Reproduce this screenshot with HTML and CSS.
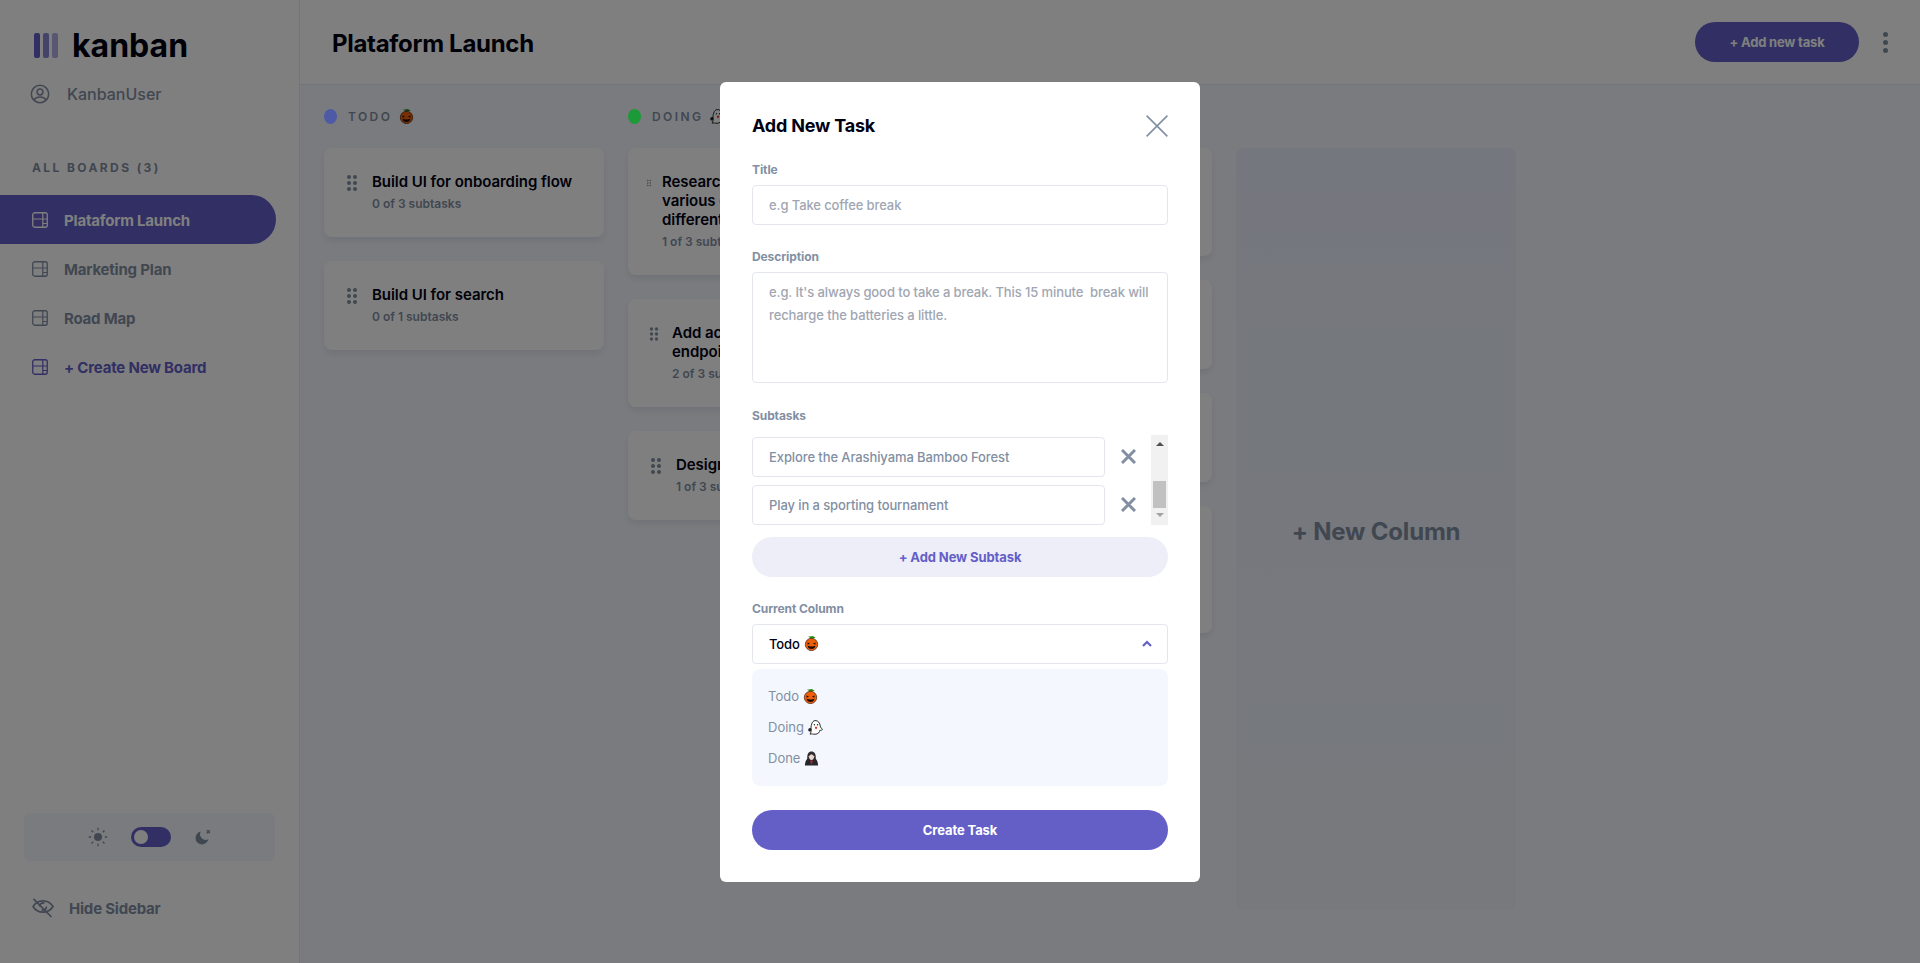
FILE: index.html
```html
<!DOCTYPE html>
<html lang="en">
<head>
    <meta charset="UTF-8">
    <meta name="viewport" content="width=device-width, initial-scale=1.0">
    <title>Kanban</title>
    <link rel="stylesheet" href="styles.css">
</head>
<body>
    <svg class="defs" width="0" height="0">
        <symbol id="board" viewBox="0 0 16 16">
            <rect x="0.75" y="0.75" width="14.5" height="14.5" rx="2" fill="none" stroke="currentColor" stroke-width="1.3"/>
            <path d="M1 7h14M10.800 1v14M10.800 11.500H15" fill="none" stroke="currentColor" stroke-width="1.200"/>
        </symbol>
        <symbol id="drag" viewBox="0 0 24 24">
            <circle cx="9" cy="6" r="2"/><circle cx="15" cy="6" r="2"/>
            <circle cx="9" cy="12" r="2"/><circle cx="15" cy="12" r="2"/>
            <circle cx="9" cy="18" r="2"/><circle cx="15" cy="18" r="2"/>
        </symbol>
        <symbol id="pumpkin" viewBox="0 0 16 16">
            <path d="M7 3.500C6.600 2 5.500 1.200 4 .9L9.500 0l3 1.800-2.700.6-.4 1.100z" fill="#2f8a1e"/>
            <circle cx="8" cy="9" r="6.600" fill="#ee5f0d" stroke="#3a1a05" stroke-width=".7"/>
            <path d="M3.800 6.800l2.600 1.200-2.600 1.200zM12.200 6.800L9.600 8l2.600 1.200zM3.800 10.500c2.200.8 6.200.8 8.400 0-.4 2.400-2 3.300-4.200 3.300s-3.800-.9-4.200-3.300z" fill="#1c0d02"/>
        </symbol>
        <symbol id="ghost" viewBox="0 0 16 16">
            <path d="M7.500 .6C11 .4 12.700 3.300 13 6.300c.2 1.500 1.700 3 2.500 3.800-.9 1-2.100 1.100-2.900.9-.2 2-1.900 4.200-5.100 4.200-1.800 0-3.500-.6-5.300-.1C2.900 13.500 3.500 12.300 3.300 10.500 2.800 7 4 .9 7.500 .6z" fill="#fff" stroke="#222" stroke-width="1"/>
            <path d="M.4 9.500c1-1.600 2.900-1.300 3.400 0 .3 1.300-1.100 3-2.400 2.700C.4 11.900 0 10.500 .4 9.500z" fill="#222"/>
            <circle cx="6.800" cy="5" r=".8" fill="#222"/><circle cx="10.200" cy="5" r=".8" fill="#222"/>
            <path d="M7.300 7.200h2.500c0 1.800-.6 2.600-1.200 2.600s-1.300-.9-1.300-2.600z" fill="#e5352b"/>
        </symbol>
        <symbol id="vampire" viewBox="0 0 16 16">
            <path d="M1 15.500c0-4 1.500-6.500 3-7.500h8c1.500 1 3 3.500 3 7.500z" fill="#26262b"/>
            <path d="M3.500 8.500C3 3 5 .5 8 .5s5 2.500 4.500 8l-2 1h-5z" fill="#2e2c33"/>
            <path d="M5.300 5.500C6 4.500 7 4 8 3.500c1 .5 2 1 2.700 2 .3 2-1 4-2.700 4s-3-2-2.700-4z" fill="#e9d5cb"/>
            <path d="M6.500 10h3L8 15z" fill="#b3262a"/>
        </symbol>
    </svg>

    <div class="app">
        <aside class="sidebar">
            <div class="logo">
                <div class="logo-bars"><span></span><span></span><span></span></div>
                <span class="logo-name">kanban</span>
            </div>
            <div class="user">
                <svg class="user-icon" viewBox="0 0 20 20" fill="none" stroke="currentColor" stroke-width="1.500">
                    <circle cx="10" cy="10" r="8.700"/>
                    <circle cx="10" cy="8" r="2.900"/>
                    <path d="M4.200 16.300c.8-2.200 3-3.200 5.800-3.200s5 1 5.800 3.200"/>
                </svg>
                <span>KanbanUser</span>
            </div>
            <h3 class="boards-title">ALL BOARDS (3)</h3>
            <nav class="boards">
                <a class="board active" href="#"><svg class="board-icon"><use href="#board"/></svg>Plataform Launch</a>
                <a class="board" href="#"><svg class="board-icon"><use href="#board"/></svg>Marketing Plan</a>
                <a class="board" href="#"><svg class="board-icon"><use href="#board"/></svg>Road Map</a>
                <a class="board create" href="#"><svg class="board-icon"><use href="#board"/></svg>+ Create New Board</a>
            </nav>
            <div class="theme">
                <svg class="sun" viewBox="0 0 20 20" fill="currentColor">
                    <circle cx="10" cy="10" r="4"/>
                    <path d="M10 .8v2.400M10 16.800v2.400M.8 10h2.400M16.800 10h2.400M3.500 3.500l1.700 1.700M14.800 14.800l1.700 1.700M3.500 16.500l1.700-1.700M14.800 5.200l1.700-1.700" fill="none" stroke="currentColor" stroke-width="1.300"/>
                </svg>
                <div class="toggle"><span class="knob"></span></div>
                <svg class="moon" viewBox="0 0 18 18" fill="currentColor">
                    <path d="M6.800 3.600A6.500 6.500 0 1 0 14.400 11.200 5.600 5.600 0 0 1 6.800 3.600z"/>
                    <path d="M12.800 2.300l3 3M15.800 2.300l-3 3" fill="none" stroke="currentColor" stroke-width="1.400"/>
                </svg>
            </div>
            <div class="hide-sidebar">
                <svg class="eye" viewBox="0 0 22 20" fill="none" stroke="currentColor" stroke-width="1.700">
                    <path d="M1 8.500C3.500 4.500 7 2.800 11 2.800s7.500 1.700 10 5.700c-2.500 4-6 5.700-10 5.700S3.500 12.500 1 8.500z"/>
                    <path d="M7.500 8.500a3.500 3.500 0 0 1 5-3.200M14.500 8.500a3.500 3.500 0 0 1-5 3.200"/>
                    <path d="M1.500 .8L19.500 19"/>
                </svg>
                <span>Hide Sidebar</span>
            </div>
        </aside>

        <div class="content">
            <header class="topbar">
                <h1>Plataform Launch</h1>
                <div class="topbar-actions">
                    <button class="add-task">+ Add new task</button>
                    <div class="kebab"><span></span><span></span><span></span></div>
                </div>
            </header>
            <main class="columns">
                <section class="column">
                    <h2 class="column-title"><span class="dot todo"></span>TODO <svg class="emoji"><use href="#pumpkin"/></svg></h2>
                    <article class="task">
                        <svg class="handle"><use href="#drag"/></svg>
                        <div><h4>Build UI for onboarding flow</h4><p>0 of 3 subtasks</p></div>
                    </article>
                    <article class="task">
                        <svg class="handle"><use href="#drag"/></svg>
                        <div><h4>Build UI for search</h4><p>0 of 1 subtasks</p></div>
                    </article>
                </section>
                <section class="column">
                    <h2 class="column-title"><span class="dot doing"></span>DOING <svg class="emoji"><use href="#ghost"/></svg></h2>
                    <article class="task">
                        <svg class="handle tiny"><use href="#drag"/></svg>
                        <div><h4>Research pricing points of various competitors and different models</h4><p>1 of 3 subtasks</p></div>
                    </article>
                    <article class="task">
                        <svg class="handle small"><use href="#drag"/></svg>
                        <div><h4>Add account management endpoints</h4><p>2 of 3 subtasks</p></div>
                    </article>
                    <article class="task">
                        <svg class="handle"><use href="#drag"/></svg>
                        <div><h4>Design settings</h4><p>1 of 3 subtasks</p></div>
                    </article>
                </section>
                <section class="column">
                    <h2 class="column-title"><span class="dot done"></span>DONE <svg class="emoji"><use href="#vampire"/></svg></h2>
                    <article class="task">
                        <svg class="handle"><use href="#drag"/></svg>
                        <div><h4>Conduct 5 wireframe tests with the design team</h4><p>1 of 1 subtasks</p></div>
                    </article>
                    <article class="task">
                        <svg class="handle"><use href="#drag"/></svg>
                        <div><h4>Market discovery</h4><p>1 of 1 subtasks</p></div>
                    </article>
                    <article class="task">
                        <svg class="handle"><use href="#drag"/></svg>
                        <div><h4>Competitor analysis</h4><p>2 of 2 subtasks</p></div>
                    </article>
                    <article class="task">
                        <svg class="handle"><use href="#drag"/></svg>
                        <div><h4>Create paper prototypes for version one of the new onboarding flow screens</h4><p>3 of 3 subtasks</p></div>
                    </article>
                </section>
                <section class="new-column">+ New Column</section>
            </main>
        </div>
    </div>

    <div class="overlay">
        <form class="modal">
            <div class="modal-head">
                <h2>Add New Task</h2>
                <svg class="close" viewBox="0 0 22 22" fill="none" stroke="currentColor" stroke-width="1.600">
                    <path d="M.6 .6l20.800 20.800M21.400 .6L.6 21.400"/>
                </svg>
            </div>

            <label class="label">Title</label>
            <input class="field" type="text" placeholder="e.g Take coffee break">

            <label class="label desc-label">Description</label>
            <textarea class="field area" placeholder="e.g. It's always good to take a break. This 15 minute  break will recharge the batteries a little."></textarea>

            <label class="label sub-label">Subtasks</label>
            <div class="subtasks">
                <div class="subtask-rows">
                    <div class="subtask">
                        <input class="field" type="text" placeholder="Explore the Arashiyama Bamboo Forest">
                        <svg class="remove" viewBox="0 0 15 15" fill="none" stroke="currentColor" stroke-width="3"><path d="M1 1l13 13M14 1L1 14"/></svg>
                    </div>
                    <div class="subtask">
                        <input class="field" type="text" placeholder="Play in a sporting tournament">
                        <svg class="remove" viewBox="0 0 15 15" fill="none" stroke="currentColor" stroke-width="3"><path d="M1 1l13 13M14 1L1 14"/></svg>
                    </div>
                </div>
                <div class="scrollbar">
                    <span class="arrow up"></span>
                    <span class="thumb"></span>
                    <span class="arrow down"></span>
                </div>
            </div>
            <button class="btn secondary" type="button">+ Add New Subtask</button>

            <label class="label col-label">Current Column</label>
            <div class="select">
                <span>Todo <svg class="emoji"><use href="#pumpkin"/></svg></span>
                <svg class="chevron" viewBox="0 0 10 7" fill="none" stroke="currentColor" stroke-width="2.200"><path d="M1 6l4-4 4 4"/></svg>
            </div>
            <ul class="options">
                <li>Todo <svg class="emoji"><use href="#pumpkin"/></svg></li>
                <li>Doing <svg class="emoji"><use href="#ghost"/></svg></li>
                <li>Done <svg class="emoji"><use href="#vampire"/></svg></li>
            </ul>
            <button class="btn primary" type="button">Create Task</button>
        </form>
    </div>
</body>
</html>
```
FILE: styles.css
```css
/* Basic styling */
* {
    box-sizing: border-box;
}

body {
    font-family: 'Inter', 'Noto Sans', sans-serif;
    background-color: #f4f7fd;
    color: #000112;
    margin: 0;
    height: 963px;
    overflow: hidden;
}

.defs {
    position: absolute;
}

.app {
    display: flex;
    height: 100%;
}

/* Sidebar */
.sidebar {
    width: 300px;
    flex-shrink: 0;
    background-color: #fff;
    border-right: 1px solid #e4ebfa;
    display: flex;
    flex-direction: column;
    color: #828fa3;
}

.logo {
    display: flex;
    align-items: center;
    gap: 14px;
    padding: 33px 0 0 34px;
    height: 58px;
}

.logo-bars {
    display: flex;
    gap: 3px;
}

.logo-bars span {
    width: 6px;
    height: 25px;
    border-radius: 2px;
    background-color: #635fc7;
}

.logo-bars span:nth-child(2) {
    opacity: 0.75;
}

.logo-bars span:nth-child(3) {
    opacity: 0.5;
}

.logo-name {
    font-size: 32px;
    font-weight: 700;
    color: #000112;
    line-height: 25px;
}

.user {
    display: flex;
    align-items: center;
    gap: 17px;
    margin: 26px 0 0 30px;
    font-size: 16px;
    font-weight: 500;
}

.user-icon {
    width: 20px;
    height: 20px;
}

.boards-title {
    margin: 56px 0 0 32px;
    font-size: 12px;
    line-height: 15px;
    font-weight: 700;
    letter-spacing: 2.4px;
}

.boards {
    margin-top: 20px;
    display: flex;
    flex-direction: column;
}

.board {
    width: 276px;
    height: 49px;
    padding: 1px 0 0 32px;
    display: flex;
    align-items: center;
    gap: 16px;
    font-size: 15px;
    font-weight: 700;
    letter-spacing: -0.2px;
    color: #828fa3;
    text-decoration: none;
    border-radius: 0 25px 25px 0;
}

.board.active {
    background-color: #635fc7;
    color: #fff;
}

.board.create {
    color: #635fc7;
}

.board-icon {
    width: 16px;
    height: 16px;
}

.theme {
    margin: auto 24px 0;
    height: 48px;
    flex-shrink: 0;
    background-color: #f4f7fd;
    border-radius: 6px;
    display: flex;
    align-items: center;
    justify-content: center;
    gap: 23px;
}

.sun {
    width: 20px;
    height: 20px;
}

.moon {
    width: 18px;
    height: 18px;
}

.toggle {
    width: 40px;
    height: 20px;
    border-radius: 10px;
    background-color: #635fc7;
    padding: 3px;
}

.knob {
    display: block;
    width: 14px;
    height: 14px;
    border-radius: 50%;
    background-color: #fff;
}

.hide-sidebar {
    display: flex;
    align-items: center;
    gap: 15px;
    margin: 37px 0 45px 32px;
    font-size: 15px;
    font-weight: 700;
    letter-spacing: -0.2px;
}

.eye {
    width: 22px;
    height: 20px;
}

/* Top bar */
.content {
    flex: 1;
    min-width: 0;
    display: flex;
    flex-direction: column;
}

.topbar {
    height: 85px;
    flex-shrink: 0;
    background-color: #fff;
    border-bottom: 1px solid #e4ebfa;
    display: flex;
    align-items: center;
    justify-content: space-between;
    padding: 0 32px;
}

.topbar h1 {
    margin: 2px 0 0;
    font-size: 24px;
    font-weight: 700;
    letter-spacing: -0.3px;
}

.topbar-actions {
    display: flex;
    align-items: center;
    gap: 24px;
}

.add-task {
    width: 164px;
    height: 40px;
    border: 0;
    border-radius: 20px;
    background-color: #635fc7;
    color: #fff;
    font-family: inherit;
    font-size: 13px;
    font-weight: 700;
    letter-spacing: -0.2px;
}

.kebab {
    width: 5px;
    display: flex;
    flex-direction: column;
    gap: 3px;
}

.kebab span {
    height: 5px;
    border-radius: 50%;
    background-color: #828fa3;
}

/* Board columns */
.columns {
    flex: 1;
    display: flex;
    gap: 24px;
    padding: 22px 0 53px 24px;
    min-height: 0;
}

.column {
    width: 280px;
    flex-shrink: 0;
}

.column-title {
    margin: 0 0 22px;
    height: 19px;
    display: flex;
    align-items: center;
    font-size: 12px;
    font-weight: 600;
    letter-spacing: 2.4px;
    color: #828fa3;
}

.column-title .emoji {
    margin-left: 7px;
}

.dot {
    width: 13px;
    height: 15px;
    border-radius: 50%;
    margin-right: 11px;
}

/* these two sit above the overlay, they are not dimmed by it */
.dot.todo {
    position: relative;
    z-index: 2;
    background-color: #4f5aa6;
}

.dot.doing {
    position: relative;
    z-index: 2;
    background-color: #1b9a37;
}

.dot.done {
    background-color: #67e2ae;
}

.task {
    background-color: #fff;
    border-radius: 8px;
    box-shadow: 0 4px 6px rgba(54,78,126,0.1);
    padding: 24px 16px 26px;
    margin-bottom: 24px;
    display: flex;
    gap: 8px;
}

.task h4 {
    margin: 0;
    font-size: 15px;
    line-height: 19px;
    font-weight: 600;
    letter-spacing: -0.05px;
}

.task p {
    margin: 5px 0 0;
    font-size: 12px;
    line-height: 15px;
    font-weight: 600;
    color: #828fa3;
}

.handle {
    flex-shrink: 0;
    width: 24px;
    height: 24px;
    margin-top: -1px;
    fill: #828fa3;
}

.handle.small {
    width: 20px;
}

.handle.tiny {
    width: 10px;
}

.new-column {
    width: 280px;
    flex-shrink: 0;
    margin-top: 41px;
    padding-top: 4px;
    border-radius: 6px;
    background: linear-gradient(#e9effa, rgba(233,239,250,0.5));
    display: flex;
    align-items: center;
    justify-content: center;
    font-size: 24px;
    font-weight: 700;
    letter-spacing: -0.2px;
    color: #828fa3;
}

/* Modal */
.overlay {
    position: fixed;
    inset: 0;
    z-index: 1;
    background-color: rgba(0,0,0,0.5);
    display: flex;
    align-items: center;
    justify-content: center;
}

.modal {
    width: 480px;
    height: 800px;
    background-color: #fff;
    border-radius: 6px;
    padding: 32px;
    display: flex;
    flex-direction: column;
}

.modal-head {
    display: flex;
    align-items: center;
    justify-content: space-between;
    height: 24px;
}

.modal-head h2 {
    margin: 0;
    font-size: 18px;
    font-weight: 700;
    letter-spacing: -0.2px;
}

.close {
    width: 22px;
    height: 22px;
    color: #828fa3;
}

.label {
    font-size: 12px;
    line-height: 15px;
    font-weight: 700;
    color: #828fa3;
    letter-spacing: -0.1px;
    margin-top: 24px;
    margin-bottom: 8px;
}

.sub-label {
    margin-top: 25px;
    margin-bottom: 12px;
}

.field {
    width: 100%;
    height: 40px;
    flex-shrink: 0;
    border: 1px solid #e4e6ee;
    border-radius: 4px;
    padding: 0 16px;
    font-family: inherit;
    font-size: 13px;
    font-weight: 500;
    letter-spacing: -0.1px;
    color: #000112;
    outline: none;
}

.field::placeholder {
    color: #a0a6b2;
    opacity: 1;
}

.subtask .field::placeholder {
    color: #828fa3;
}

.area {
    height: 111px;
    padding-top: 8px;
    line-height: 23px;
    resize: none;
}

.subtasks {
    display: flex;
    justify-content: space-between;
    height: 90px;
    flex-shrink: 0;
}

.subtask-rows {
    width: 384px;
    padding-top: 2px;
    display: flex;
    flex-direction: column;
    gap: 8px;
}

.subtask {
    display: flex;
    align-items: center;
    justify-content: space-between;
}

.subtask .field {
    width: 353px;
}

.remove {
    width: 15px;
    height: 15px;
    color: #828fa3;
    flex-shrink: 0;
}

.scrollbar {
    width: 17px;
    height: 90px;
    background-color: #f1f1f1;
    display: flex;
    flex-direction: column;
    align-items: center;
}

.arrow {
    width: 0;
    height: 0;
    border-left: 4px solid transparent;
    border-right: 4px solid transparent;
}

.arrow.up {
    margin-top: 7px;
    border-bottom: 4px solid #505050;
}

.thumb {
    width: 13px;
    height: 27px;
    margin-top: 35px;
    background-color: #c1c1c1;
}

.arrow.down {
    margin-top: 5px;
    border-top: 4px solid #a3a3a3;
}

.btn {
    width: 100%;
    height: 40px;
    flex-shrink: 0;
    border: 0;
    border-radius: 20px;
    font-family: inherit;
    font-size: 13px;
    font-weight: 700;
    letter-spacing: -0.1px;
}

.btn.secondary {
    margin-top: 12px;
    background-color: #eeeef9;
    color: #635fc7;
}

.btn.primary {
    margin-top: 24px;
    background-color: #635fc7;
    color: #fff;
}

.select {
    height: 40px;
    flex-shrink: 0;
    border: 1px solid #e4e6ee;
    border-radius: 4px;
    padding: 0 15px 0 16px;
    display: flex;
    align-items: center;
    justify-content: space-between;
    font-size: 13px;
    font-weight: 500;
    letter-spacing: -0.1px;
}

.select span {
    display: flex;
    align-items: center;
    gap: 4px;
}

.chevron {
    width: 10px;
    height: 7px;
    color: #635fc7;
}

.options {
    list-style: none;
    margin: 5px 0 0;
    padding: 12px 16px;
    height: 117px;
    flex-shrink: 0;
    background-color: #f4f7fd;
    border-radius: 8px;
    font-size: 13px;
    color: #828fa3;
}

.options li {
    height: 31px;
    display: flex;
    align-items: center;
    gap: 4px;
}

.emoji {
    width: 15px;
    height: 15px;
    flex-shrink: 0;
}
```
